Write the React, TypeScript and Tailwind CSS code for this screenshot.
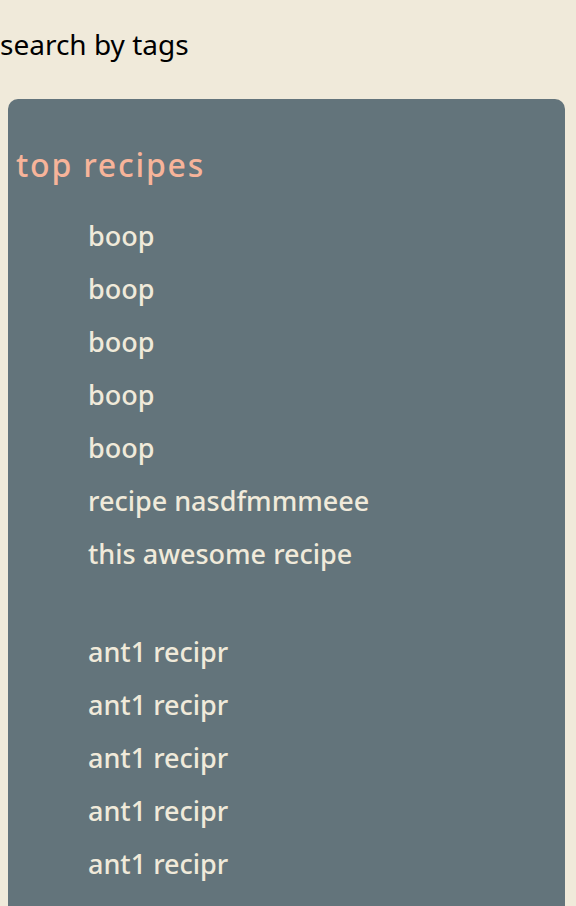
const top = ['boop', 'boop', 'boop', 'boop', 'boop', 'recipe nasdfmmmeee', 'this awesome recipe'];
const more = ['ant1 recipr', 'ant1 recipr', 'ant1 recipr', 'ant1 recipr', 'ant1 recipr'];

export default function App() {
  return (
    <div className="min-h-[906px] overflow-hidden bg-[#f0eada] font-['Noto_Sans',sans-serif]">
      <h2 className="pt-[24px] text-[28px] leading-[40px] text-black">search by tags</h2>
      <section className="ml-[8px] mr-[11px] mt-[35px] rounded-[10px] bg-[#63747b] pb-10 pl-[8px] pt-[46px]">
        <h3 className="text-[32px] font-medium leading-[40px] tracking-[1.8px] text-[#f7b49a]">top recipes</h3>
        <ul className="mt-[24px] pl-[72px] text-[27px] font-medium leading-[53px] text-[#f0eada]">
          {top.map((r, i) => (
            <li key={i}>{r}</li>
          ))}
        </ul>
        <ul className="mt-[45px] pl-[72px] text-[27px] font-medium leading-[53px] text-[#f0eada]">
          {more.map((r, i) => (
            <li key={i}>{r}</li>
          ))}
        </ul>
      </section>
    </div>
  );
}
